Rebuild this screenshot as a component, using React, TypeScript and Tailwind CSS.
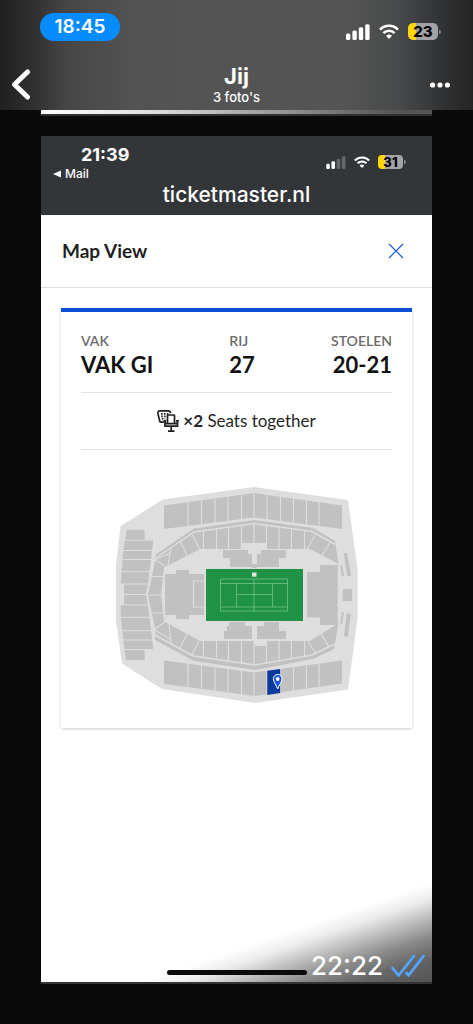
import type { ReactNode } from "react";

type BatteryProps = {
  level: number;
  className: string;
};

function Battery({ level, className }: BatteryProps) {
  return (
    <div className="flex items-center gap-px">
      <div
        className={`flex items-center justify-center bg-[linear-gradient(to_right,#ffd60a_26%,#a3a3a5_26%)] leading-none font-extrabold text-black ${className}`}
      >
        {level}
      </div>
      <span className="h-1 w-0.5 rounded-r bg-[#8a8a8c]" />
    </div>
  );
}

function SignalIcon({ bars, className }: { bars: number; className: string }) {
  return (
    <svg viewBox="0 0 24 16" className={className} fill="white" aria-hidden="true">
      {[0, 1, 2, 3].map((bar) => (
        <rect
          key={bar}
          x={bar * 6.4}
          y={9.5 - bar * 3.1}
          width="4.4"
          height={6.5 + bar * 3.1}
          rx="1.5"
          opacity={bar < bars ? 1 : 0.25}
        />
      ))}
    </svg>
  );
}

function WifiIcon({ className }: { className: string }) {
  return (
    <svg viewBox="0 0 20 15" className={className} aria-hidden="true">
      <g fill="none" stroke="white" strokeWidth="2.6">
        <path d="M1 5.6C6 .5 14 .5 19 5.6" />
        <path d="M4.4 9.2C7.6 6 12.4 6 15.6 9.2" />
      </g>
      <path d="M10 15l-3-3.2c1.7-1.6 4.3-1.6 6 0z" fill="white" />
    </svg>
  );
}

function SeatsIcon() {
  return (
    <svg viewBox="0 0 22 22" className="h-[22px] w-[22px]" fill="none" stroke="#1f1f1f" strokeWidth="1.7" aria-hidden="true">
      <path d="M3 12.2L.9 3.4Q.7 1 3 .9h8.3q2 .1 2.3 2.2M3 12.2h4.2" />
      <path d="M4 3.9h8M4.2 6.4h5M4.8 8.9h3.4" strokeDasharray="1.6 1.3" />
      <path d="M10.5 13.5V5.6q0-.6.6-.6h5.8q.6 0 .6.6v7.9" />
      <path d="M8 10.8v5.4h12.5v-5.4M8 13.7h12.5M14.2 16.2v4.5M11 21.1h6.5" />
      <path d="M6.6 10.8h2.6M19 10.8h2.8" />
    </svg>
  );
}

const STAND_DIVIDERS = [188, 201.5, 215, 228, 241.5, 254, 267, 280.5, 293.5, 306.5, 319];

const UPPER_STANDS =
  "M164 505.5L254 493l88 12.5V529l-88-11.5L164 529zM164 660.5l90 12 88-12v23L255 696l-91-12z";

function VenueMap() {
  return (
    <svg viewBox="115 485 244 220" className="w-[244px]" role="img" aria-label="VAK GI">
      <clipPath id="upper-stands">
        <path d={UPPER_STANDS} />
      </clipPath>
      <path
        d="M120.5 526L163 499.5 254 487l94 13 9.5 69v50L348 689.5 255 703l-93-14-40-25.5-6-43v-55z"
        fill="#dedede"
      />

      <g fill="#c1c1c1">
        <path d={UPPER_STANDS} />
        <path d="M126.700 529.700h18V540h8.600L149.500 571.700 148 584l-2 10.500 2 10.500 5.300 44.300h-8.600V660H126l-1.500-10.500L120.700 617v-12h3.300v-21h-3.300l2.300-31z" />
        <path d="M155 555l39-26.500 60-8.500 59 8 22 13 3.500 23L310 549H200l-35 18-3 28 3 27 35 19h110l28.500-18-4.500 26-21 10-58 11-61-9-39-21-1-11-7-33 7-33z" />
        <path d="M165 574h11v-4h13v4h15v41h-15v4h-13v-4h-11z" />
        <path d="M307 572h13v-7h17.700v60H320v-7.500h-13z" />
        <path d="M223 550h25v4h4v13h-22v-9h-7zM286 550h-25v4h-4v13h22v-9h7z" />
        <path d="M229 622h16v4h7v13h-28v-8h3v-5h2zM279 622h-15v4h-7v13h29v-8h-7z" />
        <path d="M252 564h5v4h-5z" />
        <path d="M343.700 553.300l3.300-.6 4 23-3.700.6zM340.300 565.700l2-.7 1.700 11-2 .7zM342.700 589h9.300v12h-9.300zM346.700 613.300l4 1-3 22.400-3.700-.7zM341.700 612.700l2.300-.7-1.700 11.500-2 .5z" />
      </g>

      <g stroke="#dedede" strokeWidth="1.100" fill="none">
        <g clipPath="url(#upper-stands)">
          {STAND_DIVIDERS.map((x) => (
            <path key={x} d={`M${x} 490v208`} />
          ))}
        </g>
        <path d="M122 540.300h32M121 550.500h32M120 559.500h33M120 571.700h30M120 584h28M122 594.500h24M122 605h26M120 617.300h30M120 630.700h31M121 640h32M124 649.500h30" />
        <path d="M155 554l-1 8-7 33 7 33 1 9" strokeWidth="1.800" />
        <path d="M165 567l-3 28 3 27" strokeWidth="1.800" />
        <path d="M155 558.500l39-26.500 60-8.500 58 8 23 13" strokeWidth="1.500" />
        <path d="M155 635l38 21 62 9 57-10 23-11" strokeWidth="1.500" />
        <path d="M203.500 531v19M216.500 529v21M228.500 527v23M241.500 525v25M254 524v26M266.500 525v25M279 527v23M291.500 529v21M304.500 531v19" />
        <path d="M203.500 641v16M216.500 641v18M228.500 641v20M241.500 641v22M254 641v24M266.500 641v22M279 641v20M291.500 641v18M304.500 641v15" />
        <path d="M192 534l8 16M180 541l7 14M171 548l-3 17M155 560l10 6M155 560l15-7M151 576.500h12M148 595h14M151 613h13" />
        <path d="M192 655l7-14M180 648l7-14M171 644l-2-20M155 629l10-7M155 630l15 9" />
        <path d="M307 549l8-13.500M322 556l8-13.500M308 641l8 13M321 634l8 13" />
        <path d="M204 581h-10.500v26H204" />
      </g>
      <path d="M242 543h24v6h-5v5h-4v10h-5v-10h-4v-5h-6z" fill="#dedede" />
      <path d="M254 641h13l-1 5h-11z" fill="#dedede" />

      <rect x="206" y="569" width="97" height="52" fill="#1f9245" />
      <path
        d="M220.500 579h67v32h-67zM220.500 583.500h67M220.500 607h67M236.500 583.500V607M272.500 583.500V607M236.500 594.500h36M254 579v33"
        fill="none"
        stroke="#7fc795"
        strokeWidth=".7"
      />
      <rect x="252" y="572.500" width="4.500" height="4.200" fill="#e4e9e4" />

      <path d="M267.300 670.700l12.900-1.700v24l-12.900 2z" fill="#0a3a9e" />
      <path
        d="M277.700 689c-1.400-4.200-4.300-6.500-4.300-10.300a4.300 4.300 0 018.600 0c0 3.800-2.900 6.100-4.300 10.300z"
        fill="#1f55d6"
        stroke="white"
        strokeWidth="1"
      />
      <circle cx="277.700" cy="679" r="1.900" fill="white" />
    </svg>
  );
}

function SeatDetail({ label, children }: { label: string; children: ReactNode }) {
  return (
    <div>
      <dt className="text-[14px] leading-5 font-semibold text-[#6b6b6b]">{label}</dt>
      <dd className="text-[22px] leading-7 font-bold text-[#121212]">{children}</dd>
    </div>
  );
}

function ViewerHeader() {
  return (
    <header className="h-[110px] bg-[linear-gradient(to_right,#202020_0%,#303030_7%,#464646_14%,#535353_28%,#555_72%,#484a4b_84%,#303132_94%,#242424_100%)] text-white">
      <div className="flex items-start justify-between pt-[13px] pr-8 pl-10">
        <span className="flex h-7 w-20 items-center justify-center rounded-full bg-[#078cff] text-[19px] font-semibold">
          18:45
        </span>
        <div className="flex items-center gap-[9px] pt-[10px]">
          <SignalIcon bars={4} className="h-4 w-6" />
          <WifiIcon className="h-[15px] w-5" />
          <Battery level={23} className="h-[17px] w-[30px] rounded-[5px] text-[15px]" />
        </div>
      </div>
      <div className="grid grid-cols-[1fr_auto_1fr] items-center px-[11px] pt-[23px]">
        <button type="button" aria-label="Terug" className="justify-self-start">
          <svg viewBox="0 0 20 32" className="h-8 w-5" fill="none" stroke="white" strokeWidth="5" strokeLinecap="round" strokeLinejoin="round">
            <path d="M16.500 3L3.500 15.500l13 12.500" />
          </svg>
        </button>
        <div className="text-center">
          <h1 className="text-[22px] leading-6 font-bold">Jij</h1>
          <p className="text-[13px] leading-[18px] font-medium">3 foto's</p>
        </div>
        <button type="button" aria-label="Meer" className="mr-3 justify-self-end">
          <svg viewBox="0 0 20 6" className="h-1.5 w-5" fill="white">
            <circle cx="2.600" cy="3" r="2.600" />
            <circle cx="10" cy="3" r="2.600" />
            <circle cx="17.400" cy="3" r="2.600" />
          </svg>
        </button>
      </div>
    </header>
  );
}

function PhotoStatusBar() {
  return (
    <div className="h-[79px] bg-[#333639] text-white">
      <div className="flex items-start justify-between pt-2 pr-[26px] pl-3">
        <div>
          <p className="pl-7 text-[18px] leading-[22px] font-bold">21:39</p>
          <a href="#mail" className="flex items-center gap-1 text-[12px] leading-4 font-medium">
            <svg viewBox="0 0 8 8" className="h-2 w-2" fill="white" aria-hidden="true">
              <path d="M8 .5v7L0 4z" />
            </svg>
            Mail
          </a>
        </div>
        <div className="flex items-center gap-2 pt-[11px]">
          <SignalIcon bars={2} className="h-[13px] w-5" />
          <WifiIcon className="h-3 w-4" />
          <Battery level={31} className="h-[14px] w-[25px] rounded-[4px] text-[13px]" />
        </div>
      </div>
      <p className="text-center text-[21px] leading-[26px] font-medium">ticketmaster.nl</p>
    </div>
  );
}

export default function App() {
  return (
    <div className="flex min-h-screen flex-col bg-[#0a0a0a] font-['Inter',sans-serif]">
      <ViewerHeader />

      {/* bottom edge of the previous photo */}
      <div className="mx-[41px] h-1 bg-[linear-gradient(to_right,#fff_0%,#ddd_30%,#999_60%,#555_90%)]" />
      <div className="mx-[41px] mb-5 h-0.5 bg-[#303030]" />

      <main className="relative mx-[41px] mb-10 flex flex-1 flex-col border-b-2 border-[#333] bg-white">
        <PhotoStatusBar />

        <section className="font-['Lato',sans-serif]">
          <div className="flex h-[73px] items-center justify-between border-b border-[#dcdcdc] pr-7 pl-[21px]">
            <h2 className="text-[19px] leading-6 font-bold text-[#1f1f1f]">Map View</h2>
            <button type="button" aria-label="Sluiten">
              <svg viewBox="0 0 16 16" className="h-4 w-4" fill="none" stroke="#2257d3" strokeWidth="1.200">
                <path d="M1 1l14 14M15 1L1 15" />
              </svg>
            </button>
          </div>

          <article className="mx-5 mt-5 border-t-4 border-[#0b4fd6] px-5 pb-[23px] shadow-[0_1px_3px_rgba(0,0,0,0.2)]">
            <dl className="flex justify-between border-b border-[#e3e3e3] pt-[19px] pb-[13px]">
              <SeatDetail label="VAK">VAK GI</SeatDetail>
              <SeatDetail label="RIJ">27</SeatDetail>
              <div className="text-right">
                <SeatDetail label="STOELEN">20-21</SeatDetail>
              </div>
            </dl>
            <p className="flex h-[57px] items-center justify-center gap-1 border-b border-[#e3e3e3] text-[17px] text-[#262626]">
              <SeatsIcon />
              <span>
                <b>×2</b> Seats together
              </span>
            </p>
            <div className="flex justify-center pt-[35px]">
              <VenueMap />
            </div>
          </article>
        </section>

        {/* shade behind the message time */}
        <div className="absolute right-0 bottom-0 h-[100px] w-[290px] bg-[linear-gradient(to_bottom_right,transparent_50%,rgba(0,0,0,0.08)_58%,rgba(0,0,0,0.26)_67%,rgba(0,0,0,0.46)_77%,rgba(0,0,0,0.6)_87%,rgba(0,0,0,0.68)_100%)]" />
        <div className="absolute bottom-[7px] left-[126px] h-[5px] w-[140px] rounded-full bg-[#0a0a0a]" />
        <div className="absolute right-[7px] bottom-0 flex items-center gap-2 text-white">
          <time className="text-[26px] leading-8 font-medium">22:22</time>
          <svg viewBox="0 0 34 24" className="h-6 w-[34px]" fill="none" stroke="#54a5ff" strokeWidth="2.800" strokeLinecap="round" strokeLinejoin="round" aria-hidden="true">
            <path d="M1.500 14l6 7.500L23 2M15.500 19l2 2.500L32.500 2" />
          </svg>
        </div>
      </main>
    </div>
  );
}
